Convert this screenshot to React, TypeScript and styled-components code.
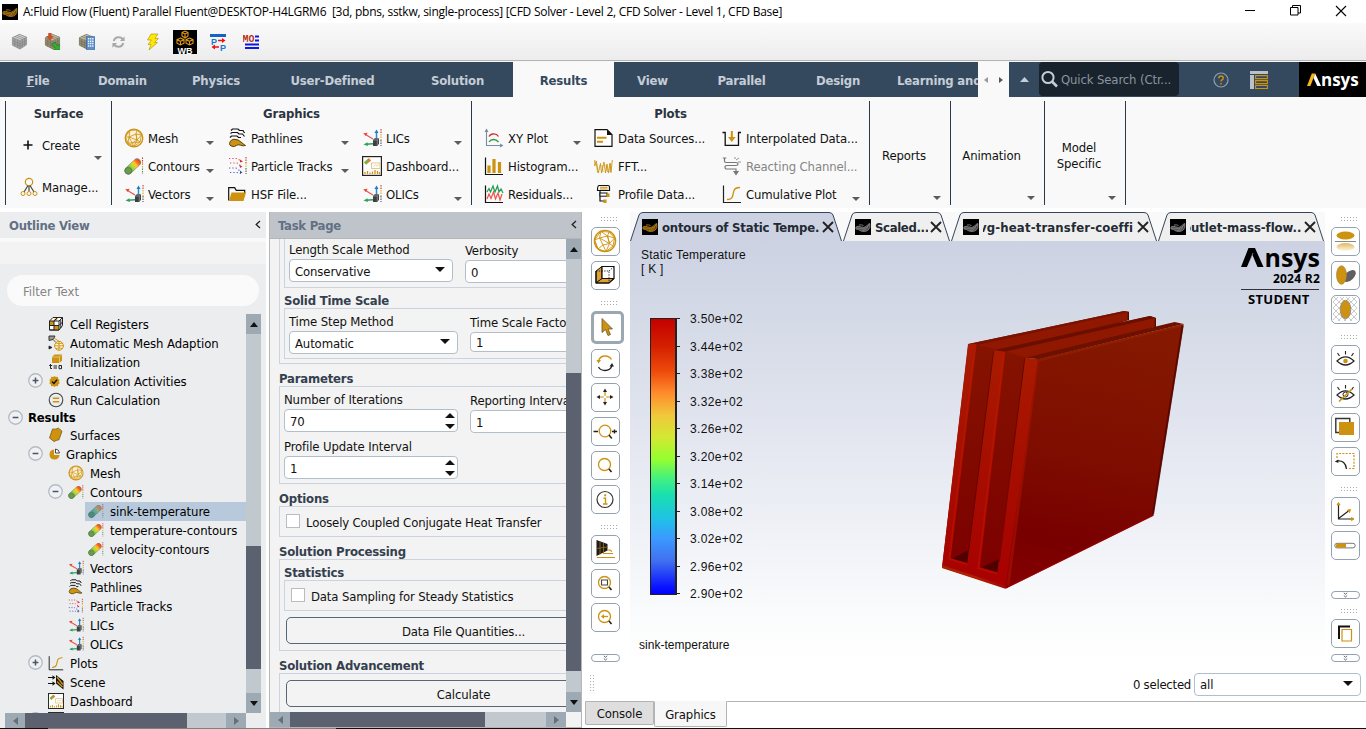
import React from 'react';
import styled, { createGlobalStyle, css } from 'styled-components';

const GOLD = '#cc9210';
const NAVY = '#34495e';
const UI = '"DejaVu Sans Condensed", "DejaVu Sans", sans-serif';
const TIGHT = '-0.13px';

const Global = createGlobalStyle`
  *, *::before, *::after { box-sizing: border-box; }
  html, body { margin: 0; padding: 0; background: #fff; overflow: hidden; }
  body { font-family: ${UI}; font-stretch: condensed; font-size: 12px; color: #111; }
  svg { display: block; flex: none; }
`;

const Window = styled.div`
  width: 1366px;
  height: 729px;
  display: flex;
  flex-direction: column;
  overflow: hidden;
  white-space: nowrap;
`;

/* ---------- title bar ---------- */
const TitleBar = styled.div`
  height: 23px;
  flex: none;
  display: flex;
  align-items: center;
  padding-left: 2px;
  background: #fff;
`;
const TitleText = styled.div`
  flex: 1;
  margin-left: 5px;
  font: 12px/23px "Open Sans", "Noto Sans", sans-serif;
  letter-spacing: -0.26px;
  color: #000;
`;
const WindowButtons = styled.div`
  display: flex;
  align-items: center;
  padding: 0 19px 2px 0;
  gap: 34px;
`;

/* ---------- quick toolbar ---------- */
const QuickBar = styled.div`
  height: 39px;
  flex: none;
  display: flex;
  align-items: center;
  padding: 0 0 1px 11px;
  background: linear-gradient(#fafafa, #ececec);
  border-bottom: 1px solid #f6f6f6;
  box-shadow: inset 0 -1px 0 #b4b4b4;
`;
const QuickSlot = styled.div<{ $w: number }>`
  width: ${(p) => p.$w}px;
  display: flex;
`;

/* ---------- ribbon tabs ---------- */
const TabBar = styled.div`
  height: 35px;
  flex: none;
  display: flex;
  background: ${NAVY};
`;
const RibbonTab = styled.div<{ $w: number; $active?: boolean; $left?: boolean }>`
  width: ${(p) => p.$w}px;
  line-height: 37px;
  font-weight: bold;
  font-size: 13px;
  letter-spacing: -0.2px;
  overflow: hidden;
  text-align: ${(p) => (p.$left ? 'left' : 'center')};
  padding-left: ${(p) => (p.$left ? 13 : 0)}px;
  color: ${(p) => (p.$active ? NAVY : '#c5cdd6')};
  background: ${(p) => (p.$active ? '#f9f9f9' : NAVY)};
`;
const TabScroller = styled.div`
  width: 31px;
  background: #f9f9f9;
  display: flex;
  align-items: center;
  justify-content: center;
  gap: 11px;
`;
const CollapseSlot = styled.div`
  width: 30px;
  display: flex;
  align-items: center;
  justify-content: center;
`;
const SearchBox = styled.div`
  width: 140px;
  height: 34px;
  border-radius: 4px;
  background: #19232d;
  display: flex;
  align-items: center;
  padding-left: 2px;
  gap: 3px;
  font-size: 13px;
  letter-spacing: -0.13px;
  color: #8a949e;
`;
const TabBarIcons = styled.div`
  flex: 1;
  display: flex;
  align-items: center;
  padding-left: 34px;
  gap: 21px;
`;
const BrandBox = styled.div`
  width: 67px;
  background: #000;
  color: #fff;
  display: flex;
  align-items: center;
  padding-left: 8px;
`;
const BrandText = styled.span<{ $size: number; $ls?: number; $up?: number }>`
  font-family: "Open Sans", Inter, sans-serif;
  font-stretch: normal;
  font-weight: 700;
  font-size: ${(p) => p.$size}px;
  line-height: ${(p) => p.$size}px;
  height: ${(p) => p.$size - (p.$up ?? 0)}px;
  margin-top: ${(p) => -(p.$up ?? 0)}px;
  letter-spacing: ${(p) => p.$ls ?? 0}px;
`;

/* ---------- ribbon ---------- */
const Ribbon = styled.div`
  height: 111px;
  flex: none;
  display: flex;
  padding: 4px 0 3px 5px;
  background: #f9f9f9;
`;
const Group = styled.div<{ $w: number }>`
  width: ${(p) => p.$w}px;
  border-left: 1px solid #2c3a48;
  position: relative;
`;
const GroupTitle = styled.div`
  height: 23px;
  line-height: 25px;
  text-align: center;
  font-weight: bold;
  font-size: 13px;
  letter-spacing: -0.12px;
  color: #2c3440;
`;
const ItemGrid = styled.div<{ $cols: string; $pad: number }>`
  display: grid;
  grid-template-columns: ${(p) => p.$cols};
  grid-auto-rows: 28px;
  padding-left: ${(p) => p.$pad}px;
`;
const Item = styled.div<{ $w?: number; $disabled?: boolean }>`
  width: ${(p) => (p.$w ? p.$w + 'px' : 'auto')};
  display: flex;
  align-items: center;
  font-size: 13px;
  letter-spacing: ${TIGHT};
  color: ${(p) => (p.$disabled ? '#858585' : '#111')};
`;
const ItemIcon = styled.span<{ $w: number }>`
  width: ${(p) => p.$w}px;
  flex: none;
  display: flex;
`;
const Caret = styled.span`
  margin: 9px 0 0 auto;
  width: 0;
  height: 0;
  border: 4px solid transparent;
  border-top-color: #5c5c5c;
  border-bottom-width: 0;
`;
const SurfaceStack = styled.div`
  display: flex;
  flex-direction: column;
  padding-left: 14px;
  padding-top: 11px;
  gap: 22px;
`;
const CreateCaret = styled(Caret)`
  margin-top: 21px;
  margin-bottom: -5px;
`;
const CenterGroup = styled.div`
  height: 100%;
  display: flex;
  flex-direction: column;
  font-size: 13px;
  letter-spacing: ${TIGHT};
  line-height: 16px;
  text-align: center;
`;
const CenterLabel = styled.div`
  flex: 1;
  display: flex;
  align-items: center;
  justify-content: center;
  padding-top: 14px;
`;
const CenterCaret = styled.div`
  height: 9px;
  display: flex;
  align-items: flex-start;
  padding-right: 9px;
  & > span { margin-top: 0; }
`;

/* ---------- main split ---------- */
const Main = styled.div`
  flex: 1;
  min-height: 0;
  display: flex;
  padding-top: 4px;
`;
const Footer = styled.div`
  height: 1px;
  flex: none;
  background: linear-gradient(to right, #111 48px, #808080 48px, #808080 336px, #111 336px);
`;

/* ---------- scrollbars ---------- */
const VBar = styled.div`
  width: 15px;
  flex: none;
  display: flex;
  flex-direction: column;
  background: #c1c8ce;
`;
const HBar = styled.div`
  height: 15px;
  flex: none;
  display: flex;
  background: #c1c8ce;
`;
const BarButton = styled.div<{ $h?: boolean }>`
  width: ${(p) => (p.$h ? 20 : 15)}px;
  height: ${(p) => (p.$h ? 15 : 20)}px;
  flex: none;
  background: #9daab3;
  display: flex;
  align-items: center;
  justify-content: center;
`;
const Thumb = styled.div<{ $size: number; $h?: boolean }>`
  flex: none;
  background: #5c6170;
  ${(p) => (p.$h ? css`width: ${p.$size}px;` : css`height: ${p.$size}px;`)}
`;
const Gap = styled.div<{ $grow?: boolean; $size?: number }>`
  flex: ${(p) => (p.$grow ? '1' : `0 0 ${p.$size ?? 0}px`)};
`;
const Corner = styled.div`
  flex: 1;
  background: #f3f3f3;
`;

/* ---------- outline ---------- */
const Outline = styled.div`
  width: 266px;
  flex: none;
  display: flex;
  flex-direction: column;
  background: #ecedef;
`;
const PanelHeader = styled.div<{ $dark?: boolean }>`
  height: 26px;
  flex: none;
  display: flex;
  align-items: center;
  justify-content: space-between;
  padding: 0 ${(p) => (p.$dark ? 4 : 5)}px 0 ${(p) => (p.$dark ? 8 : 9)}px;
  background: ${(p) => (p.$dark ? '#bfc4cb' : '#ecedef')};
  color: #627084;
  font-weight: bold;
  font-size: 13px;
  letter-spacing: -0.27px;
  & > svg { margin-top: -2px; }
`;
const HeaderStrip = styled.div`
  height: 26px;
  flex: none;
  border-top: 4px solid #f9f9f9;
  background: #f3f3f3;
`;
const FilterBox = styled.div`
  height: 31px;
  margin: 11px 7px 8px 7px;
  flex: none;
  border-radius: 16px;
  background: #fafafa;
  padding-left: 16px;
  line-height: 33px;
  font-size: 13px;
  letter-spacing: 0;
  color: #858585;
`;
const TreeArea = styled.div`
  flex: 1;
  min-height: 0;
  display: flex;
  padding-right: 5px;
`;
const Tree = styled.div`
  flex: 1;
  padding-top: 1px;
  overflow: hidden;
`;
const TreeRow = styled.div<{ $indent: number; $short?: boolean }>`
  display: flex;
  height: ${(p) => (p.$short ? 16 : 19)}px;
  margin-left: ${(p) => p.$indent}px;
`;
const ToggleSlot = styled.div`
  width: 17px;
  flex: none;
  display: flex;
  align-items: center;
  padding-bottom: 2px;
  & > svg { margin-left: -0.5px; }
`;
const TreeBody = styled.div<{ $selected?: boolean; $bold?: boolean }>`
  flex: 1;
  display: flex;
  align-items: center;
  padding-left: 3px;
  padding-bottom: ${(p) => (p.$bold ? 2 : 0)}px;
  font-size: 13px;
  letter-spacing: ${(p) => (p.$bold ? '-0.2px' : '-0.08px')};
  color: #000;
  font-weight: ${(p) => (p.$bold ? 'bold' : 'normal')};
  background: ${(p) => (p.$selected ? '#b9c9dc' : 'transparent')};
  & svg { margin-top: -1px; }
`;
const OutlineHScroll = styled.div`
  display: flex;
  padding-left: 5px;
`;

/* ---------- task page ---------- */
const Task = styled.div`
  width: 313px;
  margin-left: 3px;
  flex: none;
  display: flex;
  flex-direction: column;
  background: #f3f3f3;
  border: 1px solid #b4b6b8;
  border-top: 0;
`;
const TaskBody = styled.div`
  flex: 1;
  min-height: 0;
  display: flex;
  border-top: 1px solid #b4b6b8;
`;
const FormView = styled.div`
  width: 296px;
  overflow: hidden;
`;
const Form = styled.div`
  width: 376px;
  padding-left: 9px;
`;
const Box = styled.div<{ $h: number; $open?: boolean }>`
  height: ${(p) => p.$h}px;
  border: 1px solid #ccd3e0;
  ${(p) => p.$open && css`border-top: 0;`}
  padding-left: 4px;
`;
const SectionTitle = styled.div<{ $h?: number }>`
  height: ${(p) => p.$h ?? 22}px;
  display: flex;
  align-items: flex-end;
  line-height: 15px;
  font-weight: bold;
  font-size: 13px;
  letter-spacing: -0.2px;
  color: #34404e;
`;
const Columns = styled.div`
  display: flex;
`;
const Column = styled.div<{ $w: number; $drop?: number }>`
  width: ${(p) => p.$w}px;
  flex: none;
  padding-top: ${(p) => p.$drop ?? 0}px;
`;
const FieldLabel = styled.div<{ $h?: number }>`
  height: ${(p) => p.$h ?? 22}px;
  display: flex;
  align-items: flex-end;
  line-height: 19px;
  font-size: 13px;
  letter-spacing: ${TIGHT};
`;
const Field = styled.div<{ $w: number; $h?: number }>`
  width: ${(p) => p.$w}px;
  height: ${(p) => p.$h ?? 23}px;
  border: 1px solid #b3becb;
  border-radius: 4px;
  background: #fff;
  display: flex;
  align-items: center;
  justify-content: space-between;
  padding: 1px 7px 0 5px;
  font-size: 13px;
  letter-spacing: ${TIGHT};
`;
const DownArrow = styled.span`
  width: 0;
  height: 0;
  margin-top: -3px;
  border: 5px solid transparent;
  border-top-color: #111;
  border-bottom-width: 0;
`;
const Spinner = styled.span`
  display: flex;
  flex-direction: column;
  gap: 6px;
  margin-right: -5px;
  margin-top: -1px;
  &::before, &::after {
    content: '';
    border: 5px solid transparent;
    border-top-width: 0;
    border-bottom-color: #111;
  }
  &::after { transform: rotate(180deg); }
`;
const CheckRow = styled.div`
  height: 29px;
  display: flex;
  align-items: center;
  padding: 1px 0 0 2px;
  gap: 6px;
  font-size: 13px;
  letter-spacing: -0.15px;
`;
const CheckBox = styled.span`
  width: 14px;
  height: 14px;
  border: 1px solid #b9bcc0;
  background: #fff;
  margin-top: -2px;
`;
const WideButton = styled.div`
  width: 355px;
  height: 27px;
  margin: 6px 0 0 2px;
  border: 1px solid #55657a;
  border-radius: 5px;
  line-height: 27px;
  text-align: center;
  font-size: 13px;
  letter-spacing: ${TIGHT};
`;

/* ---------- graphics ---------- */
const Graphics = styled.div`
  flex: 1;
  min-width: 0;
  display: flex;
  flex-direction: column;
  padding-left: 3px;
`;
const Stage = styled.div`
  height: 452px;
  flex: none;
  display: flex;
`;
const ToolColumn = styled.div<{ $w: number; $pad: number }>`
  width: ${(p) => p.$w}px;
  flex: none;
  display: flex;
  flex-direction: column;
  padding: 5px 0 0 ${(p) => p.$pad}px;
`;
const ToolButton = styled.div<{ $active?: boolean }>`
  width: ${(p) => (p.$active ? 33 : 29)}px;
  height: ${(p) => (p.$active ? 33 : 29)}px;
  margin-bottom: 5px;
  padding: 0 ${(p) => (p.$active ? 4 : 2)}px 1px 0;
  border: ${(p) => (p.$active ? '3px solid #9ba7b1' : '1px solid #93a1b0')};
  border-radius: 5px;
  background: #fff;
  display: flex;
  align-items: center;
  justify-content: center;
`;
const Dots = styled.div<{ $before?: number; $after: number }>`
  width: 17px;
  height: 5px;
  margin: ${(p) => p.$before ?? 0}px 0 ${(p) => p.$after}px 10px;
  background-image: radial-gradient(circle at 0.5px 0.5px, #aaa 0.8px, transparent 0.9px);
  background-size: 3px 3px;
`;
const MorePill = styled.div<{ $mt: number; $mb?: number }>`
  width: 29px;
  height: 8px;
  margin: ${(p) => p.$mt}px 0 ${(p) => p.$mb ?? 0}px;
  border: 1px solid #93a1b0;
  border-radius: 4px;
  background: #fff;
  display: flex;
  align-items: center;
  justify-content: center;
`;
const ViewColumn = styled.div`
  width: 695px;
  flex: none;
  display: flex;
  flex-direction: column;
`;
const ViewTabs = styled.div`
  height: 29px;
  display: flex;
  gap: 1px;
  background: #f9f9f9;
`;
const ViewTab = styled.div<{ $w: number }>`
  width: ${(p) => p.$w}px;
  position: relative;
  display: flex;
  align-items: center;
  padding: 0 8px 0 12px;
`;
const TabShape = styled.svg`
  position: absolute;
  left: 0;
  top: 0;
`;
const TabFace = styled.div`
  position: relative;
  display: flex;
  align-items: center;
  width: 100%;
`;
const TabText = styled.div<{ $shift?: number; $ls?: number }>`
  flex: 1;
  min-width: 0;
  overflow: hidden;
  margin: 2px 2px 0 4px;
  text-indent: ${(p) => p.$shift ?? 0}px;
  font-weight: bold;
  font-size: 13px;
  letter-spacing: ${(p) => p.$ls ?? -0.2}px;
  color: #232a33;
`;
const Viewport = styled.div`
  flex: 1;
  position: relative;
  background: linear-gradient(#ccd2e2 0%, #dde1ec 35%, #eceef5 62%, #fafbfc 88%, #fff 100%);
  font-family: "Liberation Sans", Arial, sans-serif;
  font-stretch: normal;
  color: #111;
`;
const Placed = styled.div<{ $x: number; $y: number }>`
  position: absolute;
  left: ${(p) => p.$x}px;
  top: ${(p) => p.$y}px;
`;
const SceneText = styled.div<{ $ls?: number }>`
  font-size: 12px;
  line-height: 14px;
  letter-spacing: ${(p) => p.$ls ?? 0.25}px;
`;
const Legend = styled.div`
  display: flex;
  gap: 10px;
`;
const LegendBar = styled.div`
  width: 27px;
  height: 277px;
  border: 1px solid #222;
  border-right-width: 2px;
  background: linear-gradient(#c40000 0%, #d42000 10%, #ee4a0c 19%, #ff8c2c 27%, #f0c83c 35%,
    #d4e832 43%, #94ff30 51%, #44f080 58%, #18e0b0 64%, #20c0e8 73%, #3c98ff 80%, #4070f0 88%, #0c18ff 97%, #0000ff 100%);
`;
const LegendScale = styled.div`
  display: flex;
  flex-direction: column;
  margin: -6px 0 0 -10px;
`;
const LegendRow = styled.div`
  height: 27.5px;
  display: flex;
  align-items: flex-start;
  font-size: 12px;
  line-height: 14px;
  letter-spacing: 0.33px;
  &::before {
    content: '';
    width: 3px;
    height: 1px;
    margin: 6px 10px 0 0;
    background: #222;
  }
`;
const LogoBlock = styled.div`
  width: 79px;
  display: flex;
  flex-direction: column;
  align-items: flex-end;
  color: #000;
`;
const LogoRow = styled.div`
  height: 26px;
  display: flex;
  align-items: flex-start;
`;
const LogoRule = styled.div`
  width: 78px;
  height: 1px;
  margin: 4px 1px 3px 0;
  background: #333;
`;
const StudentRow = styled.div`
  width: 79px;
  padding-left: 7px;
`;
const SelectRow = styled.div`
  height: 37px;
  flex: none;
  display: flex;
  align-items: center;
  padding: 3px 5px 0 5px;
  font-size: 13px;
  letter-spacing: -0.25px;
`;
const DotsV = styled.div`
  width: 5px;
  height: 18px;
  background-image: radial-gradient(circle at 0.5px 0.5px, #aaa 0.8px, transparent 0.9px);
  background-size: 3px 3px;
`;
const SelectLabel = styled.div`
  margin: 0 3px 0 auto;
`;
const BottomTabs = styled.div`
  flex: 1;
  display: flex;
  align-items: flex-start;
`;
const BottomTab = styled.div<{ $w: number; $active?: boolean }>`
  width: ${(p) => p.$w}px;
  height: ${(p) => (p.$active ? 26 : 24)}px;
  border: 1px solid #b4b4b4;
  border-top-color: ${(p) => (p.$active ? '#f7f7f7' : '#b4b4b4')};
  border-radius: 0 0 2px 2px;
  background: ${(p) => (p.$active ? '#f7f7f7' : '#dedede')};
  text-align: center;
  font-size: 13px;
  letter-spacing: ${TIGHT};
  line-height: ${(p) => (p.$active ? 25 : 23)}px;
`;
const BottomRule = styled.div`
  flex: 1;
  border-top: 1px solid #b4b4b4;
`;

/* ---------- icons ---------- */
type S = { s?: number };

const MeshIcon = ({ s = 20 }: S) => (
  <svg width={s} height={s} viewBox="0 0 20 20" fill="none" stroke={GOLD} strokeWidth=".8">
    <circle cx="10" cy="10" r="8.800" fill="#fbf1da" strokeWidth="1.300" />
    <path d="M6 2.500 13 2l4.500 5L16 14l-6 4.500L4 15 1.500 9zM6 2.500 5 9l7-3 1-4M12 6l5.500 1L13 12zM5 9l3 6 5-3-1-6M8 15l-4 0L5 9H1.500M8 15l2 3.500 3-6.500 3 2M5 9l8 3M8 15l8-1" />
  </svg>
);
const ContoursIcon = ({ s = 20, cool }: S & { cool?: boolean }) => {
  const id = cool ? 'tubeCool' : 'tubeHot';
  return (
    <svg width={s} height={s} viewBox="0 0 20 20" fill="none">
      <defs>
        <linearGradient id={id} gradientUnits="userSpaceOnUse" x1="2" y1="17" x2="17" y2="3">
          <stop offset="0.2" stopColor={cool ? '#3c9a8c' : '#5ea83c'} />
          <stop offset=".45" stopColor={cool ? '#58a8a0' : '#b4dc3c'} />
          <stop offset=".62" stopColor={cool ? '#98a878' : '#ffc828'} />
          <stop offset=".78" stopColor={cool ? '#b88468' : '#f8641c'} />
          <stop offset="1" stopColor={cool ? '#7a88a4' : '#d83c10'} />
        </linearGradient>
      </defs>
      <path d="M4.500 14.500 13 6.500" stroke="#7c8078" strokeWidth="7.800" strokeLinecap="round" />
      <path d="M4.500 14.500 13 6.500" stroke={`url(#${id})`} strokeWidth="6.800" strokeLinecap="round" />
      <ellipse cx="4.300" cy="14.800" rx="3.500" ry="3.300" fill={cool ? '#4a8c8c' : '#6a9c50'} stroke="#4c7a40" strokeWidth=".7" />
      <path d="M18.500 1.500v6" stroke="#c84030" strokeWidth="1.100" strokeDasharray="1.500 1" />
      <path d="M18.500 7.500v5" stroke="#d8a820" strokeWidth="1.100" strokeDasharray="1.500 1" />
      <path d="M18.500 12.500v5.500" stroke="#4c8c5c" strokeWidth="1.100" strokeDasharray="1.500 1" />
    </svg>
  );
};
const VectorsIcon = ({ s = 20 }: S) => (
  <svg width={s} height={s} viewBox="0 0 20 20" fill="none">
    <path d="M11 11 3.500 6.500" stroke="#e8584c" strokeWidth="1.300" />
    <path d="M1.200 5.200l4.500-.4-1.900 3.300z" fill="#e8483c" />
    <path d="M14.500 10V4.500" stroke="#2c88cc" strokeWidth="1.500" />
    <path d="M14.500 1.500l2 3.500h-4z" fill="#1c7cc8" />
    <path d="M11 15.800 4 16.300" stroke="#2ca058" strokeWidth="1.500" />
    <path d="M1.500 16.500l4-2.200.4 3.700z" fill="#2ca058" />
    <path d="M11 12l1.700-1.800H17v5.500L15.300 18H11z" fill="#3c4044" />
    <path d="M11 12h4.300l1.700-1.800M15.300 12v6" stroke="#9a9ea2" strokeWidth=".7" />
    <path d="M19 1v5" stroke="#c84030" strokeWidth="1.100" strokeDasharray="1.500 1" />
    <path d="M19 6v6" stroke="#d8a820" strokeWidth="1.100" strokeDasharray="1.500 1" />
    <path d="M19 12v6" stroke="#555" strokeWidth="1.100" strokeDasharray="1.500 1" />
  </svg>
);
const PathlinesIcon = ({ s = 20 }: S) => (
  <svg width={s} height={s} viewBox="0 0 20 20" fill="none" stroke="#111" strokeWidth="1.200">
    <path d="M3 2.500 4.500 1H10l1.500 1.500H15L16.500 5M2.500 5.500 4 4.500h5.500L11 6h3.500L16.500 8.500M2 9.500 3.500 8H9l1.500 1.500H13" />
    <path d="M1.500 15.500q1-4.500 5.500-4.200 3.500.2 6 2.700 2 1.800 4.500 3.500-2 .8-5-.3-2.500-1-4 .3-2 1.500-4.500.8-2.700-.7-2.500-2.800z" fill={GOLD} stroke="#4a3608" strokeWidth=".9" />
  </svg>
);
const ParticleIcon = ({ s = 20 }: S) => (
  <svg width={s} height={s} viewBox="0 0 20 20" fill="none" strokeWidth="1.200">
    <path d="M1 2.500h8l4 2.500" stroke="#e05048" strokeDasharray="1.300 2" />
    <path d="M2 7h7l4 3" stroke="#e05048" strokeDasharray="1.300 2" />
    <path d="M12 3.500l3 2-3 1zM11.500 9l3 1.500-2.500 1.500z" fill="#c83048" />
    <path d="M1 12h7l5 3.500" stroke="#5060d0" strokeDasharray="1.300 2" />
    <path d="M2 16.500h7l4 1" stroke="#5060d0" strokeDasharray="1.300 2" />
    <path d="M12 14.500l2.500 2-2.500 1z" fill="#404890" />
    <path d="M18 1v6" stroke="#c84030" strokeWidth="1.100" strokeDasharray="1.500 1" />
    <path d="M18 7v5" stroke="#d8c020" strokeWidth="1.100" strokeDasharray="1.500 1" />
    <path d="M18 12v6" stroke="#556" strokeWidth="1.100" strokeDasharray="1.500 1" />
  </svg>
);
const FolderIcon = () => (
  <svg width="20" height="20" viewBox="0 0 20 20">
    <path d="M.7 16.500V3.700h6l1.500 2.600h8.500v3" fill="none" stroke="#111" strokeWidth="1.200" />
    <path d="M3.500 8.500H18L15.500 17H1z" fill={GOLD} />
  </svg>
);
const DashIcon = ({ s = 20 }: S) => (
  <svg width={s} height={s} viewBox="0 0 20 20" fill="none">
    <rect x=".6" y=".6" width="18.800" height="18.800" fill="#fff" stroke="#222" strokeWidth="1.200" />
    <path d="M3 7.500 6.500 4.500" stroke="#7fb03c" strokeWidth="3.300" />
    <path d="M6 5 8 3.200" stroke="#e08030" strokeWidth="3.300" />
    <rect x="9.500" y="7" width="8.500" height="5.500" stroke="#e4c888" />
    <path d="M11.500 10.500l2-1.500 1.500 1 2-1.500" stroke="#e4c888" strokeWidth=".8" />
    <path d="M3 18v-2M5.500 18v-3M8 18v-1.500M10.500 18v-2.500M13 18v-4M15.500 18v-3M17.500 18v-2" stroke={GOLD} strokeWidth="1.300" />
  </svg>
);
const XYIcon = () => (
  <svg width="20" height="20" viewBox="0 0 20 20" fill="none">
    <path d="M2.500 1.500v16H18" stroke="#7a8ca0" strokeWidth="1.100" />
    <path d="M.5 4l2-3.500 2 3.500zM16 15.500l3.500 2-3.500 2z" fill="#7a8ca0" />
    <path d="M5 8.500q1-2 3.500-2.500 4-.7 6 2.500" stroke="#d02828" strokeWidth="1.300" />
    <path d="M5 14q1.500-2.500 4.500-2.500 3 0 5 2.500" stroke="#2c9c3c" strokeWidth="1.300" />
  </svg>
);
const HistIcon = () => (
  <svg width="20" height="20" viewBox="0 0 20 20" fill="none">
    <path d="M1.500 1.500v17H19" stroke="#111" strokeWidth="1.200" />
    <path d="M5 17V9.500M10 17V3M15.500 17V6" stroke={GOLD} strokeWidth="3.200" />
  </svg>
);
const ResidIcon = () => (
  <svg width="20" height="20" viewBox="0 0 20 20" fill="none">
    <path d="M1.500 1.500v17H19" stroke="#111" strokeWidth="1.200" />
    <path d="M3 8l2-3.500L6.500 8 9 2l2 6 2.500-6L15 8l2-3 2 4" stroke="#1c9c54" strokeWidth="1.200" />
    <path d="M3 15l2-5 2 4.500L9.500 8l2 7L14 9l2 7 2-6" stroke="#f05048" strokeWidth="1.200" />
  </svg>
);
const SourcesIcon = () => (
  <svg width="20" height="20" viewBox="0 0 20 20" fill="none">
    <path d="M1 1.700h12l5 5v11.600H1z" fill="#fff" stroke="#111" strokeWidth="1.200" />
    <path d="M13 1.500v5.500h5.500z" fill="#111" />
    <path d="M3 9.800h9.500M3 13.800h6" stroke={GOLD} strokeWidth="2" />
  </svg>
);
const FftIcon = () => (
  <svg width="20" height="20" viewBox="0 0 20 20" fill="none" stroke={GOLD} strokeWidth=".9">
    <path d="M.8 4v6l1.500-5 2 12L6.500 7.500l1 9.500L10 6l1.500 11L13 8l1.500 9L16 7l1 9.500L18.300 4" />
    <path d="M2.500 8l1 8.500M8 9l1 7M12 9l1.500 7M16.500 8l-.5 8" strokeWidth=".7" />
  </svg>
);
const ProfileIcon = () => (
  <svg width="20" height="20" viewBox="0 0 20 20" fill="none">
    <path d="M3.500 6.500q0-5 1.500-5h9q1.500 0 1.500 1.500v3.500zM6 6.500V10h7M6 10v7h4" stroke="#111" strokeWidth="1.200" />
    <path d="M6 3.300h7.500M6 5h7.500" stroke={GOLD} />
    <rect x="6" y="9" width="7" height="3.200" stroke="#111" fill="#fff" />
    <path d="M12.500 9.500h3v3.500h-3zM9.500 15.500h3v3.500h-3z" fill={GOLD} />
  </svg>
);
const InterpIcon = () => (
  <svg width="20" height="20" viewBox="0 0 20 20" fill="none">
    <path d="M.5 4.500h3.200M3.200 4v13.300h13.300V4M16 4.500h3" stroke="#111" strokeWidth="1.300" />
    <path d="M9.800 3v8" stroke={GOLD} strokeWidth="2" />
    <path d="M6 9h7.600l-3.800 5z" fill={GOLD} />
  </svg>
);
const ReactIcon = () => (
  <svg width="20" height="20" viewBox="0 0 20 20" fill="none" stroke="#777" strokeWidth="1.200">
    <path d="M2.500 2v3q0 1.500 1.500 1.500h10q2 0 2 1.500t-2 1.500H5q-2 0-2 1.800t2 1.700h9v4" />
    <path d="M.8 2h3.500M12 15.500l2 3 2-3z" fill="#777" />
    <path d="M14 4l3-2M16 6h3M13 3V1" strokeWidth=".8" />
  </svg>
);
const CumIcon = ({ s = 20 }: S) => (
  <svg width={s} height={s} viewBox="0 0 20 20" fill="none">
    <path d="M1.500 1.500v17H19" stroke="#222" strokeWidth="1.200" />
    <path d="M5 15.500q4.500 0 5.500-3l1.500-6q1-3 6-3" stroke={GOLD} strokeWidth="1.300" />
  </svg>
);
const ManageIcon = () => (
  <svg width="18" height="20" viewBox="0 0 18 20" fill="none">
    <circle cx="9" cy="5" r="3.700" stroke={GOLD} strokeWidth="1.200" />
    <path d="M8 8.500 4 15M9 9V14M10 8.500l4 6.500" stroke="#444" strokeWidth="1.200" />
    <circle cx="3" cy="16.500" r="2" stroke={GOLD} />
    <circle cx="9" cy="16.500" r="2" stroke={GOLD} />
    <circle cx="15" cy="16.500" r="2" stroke={GOLD} />
  </svg>
);
const PlusIcon = () => (
  <svg width="10" height="10" viewBox="0 0 10 10" stroke="#111" strokeWidth="1.600">
    <path d="M5 .5v9M.5 5h9" />
  </svg>
);
const FluentIcon = ({ gray }: { gray?: boolean }) => (
  <svg width="16" height="16" viewBox="0 0 16 16" fill="none" strokeWidth=".9">
    <path d="M0 0h16v16H0z" fill="#000" />
    <g stroke={gray ? '#848484' : '#b07c18'}>
      <path d="M1 8Q3 6.500 6 8q3 1.200 5-.5 2-2.500 3.800-3v4q-1 3-3.800 3.700-4 .8-6-.7Q3.500 10 1 10z" fill={gray ? '#444' : '#644408'} />
      <path d="M2 9q2 0 4 .8 3 1 6-1.800l2.800-2.500M4 6q3-.5 4.500.5M7 11.500q4 0 6-3" />
    </g>
  </svg>
);
const CubeIcon = ({ gray, extra }: { gray?: boolean; extra?: React.ReactNode }) => (
  <svg width="17" height="17" viewBox="0 0 18 18" strokeWidth=".6">
    <path d="M1.500 5 9 1.500 16.500 4.500v8L9.500 17l-8-4z" fill={gray ? '#a4a4a4' : '#989274'} stroke={gray ? '#808080' : '#5c5844'} />
    <path d="M1.500 5 9 1.500l7.500 3L9.500 8z" fill={gray ? '#d0d0d0' : '#c8c2a0'} stroke="#888" />
    <path d="M9.500 8v9M4 6.200v8M7 7v9M12 7v8.500M14.500 5.500v8M1.500 8l8 3.500 7-4M1.500 10.500l8 3.500 7-4M4 3.800l8 3M6.500 2.700l8 3" stroke={gray ? '#7c7c7c' : '#6c6852'} fill="none" />
    {extra}
  </svg>
);
const ToggleIcon = ({ open }: { open?: boolean }) => (
  <svg width="15" height="15" viewBox="0 0 14 14" fill="none">
    <circle cx="7" cy="7" r="6.300" stroke="#b4bac4" strokeWidth="1.200" fill="#f0f1f3" />
    <path d={open ? 'M4.300 7h5.400' : 'M4.300 7h5.400M7 4.300v5.400'} stroke="#4a5568" strokeWidth="1.400" />
  </svg>
);
const RegistersIcon = () => (
  <svg width="16" height="16" viewBox="0 0 16 16" fill="none" stroke="#222">
    <path d="M1.500 5 5 1.500h9.500v8L11 14H1.500z" fill="#fff" />
    <path d="M1.500 5H6v4.500H1.500zM6 9.500h5V14H6z" fill={GOLD} stroke="none" />
    <path d="M7 2.500h3L8.500 4.500h-3z" fill={GOLD} stroke="none" />
    <path d="M1.500 5H11v9H1.500zM11 5l3.500-3.500M6 5v9M1.500 9.500H11l3.500-3.500M6 5l3.500-3.500M12.800 3.500v8.500" />
  </svg>
);
const AdaptionIcon = () => (
  <svg width="16" height="16" viewBox="0 0 16 16" fill="none">
    <path d="M1 5.500V1h6L5 4.500z" fill="#999" stroke="#222" strokeWidth=".9" />
    <path d="M1 11l3 1.500L1 14zM5 4.500l3 3" fill="#222" stroke="#222" strokeWidth=".8" />
    <path d="M5 2.500 14 8" stroke={GOLD} strokeWidth=".9" />
    <circle cx="11" cy="10.800" r="4.400" stroke={GOLD} fill="#fff4d8" />
    <path d="M11 6.500v9M6.500 10.800h9M8 8q3 1.500 6.500 0M8 13.500q3-1.500 6.500 0" stroke={GOLD} strokeWidth=".9" />
  </svg>
);
const InitIcon = () => (
  <svg width="16" height="16" viewBox="0 0 16 16">
    <path d="M4 3 6.500.5H14v6L11.500 9H4z" fill={GOLD} />
    <path d="M4 3h7.500v6M11.500 3 14 .5" stroke="#f0d090" strokeWidth=".8" fill="none" />
    <path d="M2.500 10v4.500h1.500M1.200 11.500h3M5.500 12h3.500M5.500 14h3.500M11 11.500h2.500v3.200H11z" stroke="#222" strokeWidth="1" fill="none" />
  </svg>
);
const ActivitiesIcon = () => (
  <svg width="13" height="13" viewBox="0 0 13 13">
    <path d="M6.500 1 7.800 2l2-.2.400 1.900 1.500 1.200-.8 1.600.8 1.700-1.500 1.200-.4 1.900-2-.2L6.500 12 5.200 11.100l-2 .2-.4-1.900L1.300 8.200l.8-1.700-.8-1.600L2.800 3.700l.4-1.900 2 .2z" fill={GOLD} />
    <path d="M4 6.500l1.900 1.900L9 4.700" fill="none" stroke="#111" strokeWidth="1.400" />
  </svg>
);
const RunIcon = () => (
  <svg width="16" height="16" viewBox="0 0 16 16" fill="none">
    <circle cx="8" cy="8" r="6.800" stroke="#444" strokeWidth="1.100" />
    <path d="M4.800 6.300h6.400M4.800 9.700h6.400" stroke={GOLD} strokeWidth="1.600" />
  </svg>
);
const SurfacesIcon = () => (
  <svg width="16" height="16" viewBox="0 0 16 16">
    <path d="M4.500 2q3 .5 6-.8l3.500 3-3 8.500q-2.500.5-5 1.800L1.500 11z" fill={GOLD} stroke="#7a5a10" strokeWidth=".8" />
  </svg>
);
const PieIcon = () => (
  <svg width="13" height="13" viewBox="0 0 13 13">
    <path d="M6 1.500A5 5 0 1 0 11.500 7H6z" fill={GOLD} />
    <path d="M7.500 1A4.500 4.500 0 0 1 11.500 5H7.500z" fill="#fff" stroke="#333" strokeWidth=".9" />
  </svg>
);
const SceneIcon = () => (
  <svg width="16" height="16" viewBox="0 0 16 16">
    <path d="M0 3.500h5M0 9.500h5" stroke="#111" strokeWidth="1.200" />
    <path d="M4.500 1.200 7.500 3.500l-3 2.300zM4.500 7.200l3 2.300-3 2.300z" fill="#111" />
    <path d="M8 1 15.500 7v8.500L8 9.500z" fill="#111" />
    <path d="M9 3l5.800 7.500M9 7.500l5.500 5.500" stroke={GOLD} strokeWidth="1.500" />
  </svg>
);
const Tri = ({ d, c = '#111', w = 10, h = 6 }: { d: 'up' | 'down' | 'left' | 'right'; c?: string; w?: number; h?: number }) => {
  const pts = {
    up: `0,${h} ${w / 2},0 ${w},${h}`,
    down: `0,0 ${w},0 ${w / 2},${h}`,
    left: `${w},0 0,${h / 2} ${w},${h}`,
    right: `0,0 ${w},${h / 2} 0,${h}`,
  }[d];
  return (
    <svg width={w} height={h}>
      <polygon points={pts} fill={c} />
    </svg>
  );
};
const Chevron = () => (
  <svg width="6" height="9" viewBox="0 0 6 9" fill="none" stroke="#222" strokeWidth="1.300">
    <path d="M5 1 1.200 4.500 5 8" />
  </svg>
);
const CloseIcon = () => (
  <svg width="12" height="12" viewBox="0 0 12 12" stroke="#222" strokeWidth="1.900">
    <path d="M1 1l10 10M11 1 1 11" />
  </svg>
);
const Svg = ({ children, s = 22 }: { children: React.ReactNode; s?: number }) => (
  <svg width={s} height={s} viewBox="0 0 22 22" fill="none">
    {children}
  </svg>
);
const PillMark = () => (
  <svg width="5" height="6" viewBox="0 0 5 6" fill="none" stroke="#444" strokeWidth=".8">
    <path d="M.8.8l1.700 1.500L4.200.8M.8 3.500 2.500 5l1.700-1.500" />
  </svg>
);

/* lens body shared by the zoom tools */
const Lens = ({ children }: { children?: React.ReactNode }) => (
  <Svg>
    <circle cx="10.500" cy="10.500" r="6" stroke={GOLD} strokeWidth="1.300" />
    <path d="M15 15l2.500 3" stroke="#222" strokeWidth="1.600" />
    {children}
  </Svg>
);
const Eye = ({ off }: { off?: boolean }) => (
  <Svg>
    <path d="M3 13q8.500-8.500 17 0-8.500 8-17 0z" stroke="#222" strokeWidth="1.200" />
    <path d="M11.500 3v3.500M3.500 5l2 3M19.500 5l-2 3" stroke="#222" strokeWidth="1.100" />
    {off ? (
      <>
        <circle cx="11.500" cy="12.500" r="2.500" stroke="#222" />
        <path d="M5 19.500 18 7" stroke={GOLD} strokeWidth="1.700" />
      </>
    ) : (
      <circle cx="11.500" cy="13" r="2.300" fill={GOLD} />
    )}
  </Svg>
);
const Sphere = () => (
  <svg width="24" height="24" viewBox="0 0 24 24" fill="none" stroke={GOLD} strokeWidth=".9">
    <circle cx="12" cy="12" r="10.600" strokeWidth="1.400" />
    <path d="M8 2.500 16 3l5.500 6L20 17l-7 5.500L5 20 1.500 11zM8 2.500 6.500 9l8-2L16 3M14.500 7l7 2-5 5.500zM6.500 9l3.500 7 6.500-1.500-2-7.500M10 16l-5 4L1.500 11l5-2M10 16l3 6.500 3.500-8L20 17M6.500 9l10 5.500M8 2.500l6.500 4.500" />
  </svg>
);

/* ---------- heat sink model ---------- */
const HeatSink = () => (
  <svg width="290" height="310" viewBox="0 0 870 930">
    <defs>
      <linearGradient id="face" x1="0.300" y1="0" x2="0.150" y2="1">
        <stop offset="0" stopColor="#841800" />
        <stop offset=".5" stopColor="#7e0c00" />
        <stop offset=".8" stopColor="#780000" />
        <stop offset="1" stopColor="#840000" />
      </linearGradient>
      <linearGradient id="front" gradientUnits="userSpaceOnUse" x1="0" y1="150" x2="0" y2="880">
        <stop offset="0" stopColor="#a81c00" />
        <stop offset=".5" stopColor="#a60e00" />
        <stop offset="1" stopColor="#a80000" />
      </linearGradient>
      <linearGradient id="inner" gradientUnits="userSpaceOnUse" x1="0" y1="60" x2="0" y2="820">
        <stop offset="0" stopColor="#861600" />
        <stop offset="1" stopColor="#7c0000" />
      </linearGradient>
      <linearGradient id="base" x1="0" y1="0" x2="1" y2="0">
        <stop offset="0" stopColor="#a02800" />
        <stop offset=".5" stopColor="#b42000" />
        <stop offset="1" stopColor="#a00c00" />
      </linearGradient>
    </defs>
    {/* rear fin */}
    <path d="M145 147 612 48 627 50 625 76 500 115 300 190 260 840 66 818z" fill="url(#inner)" />
    <path d="M145 147 612 48 627 51 170 151z" fill="#7a1200" />
    <path d="M170 151 627 51 625 74 240 164z" fill="#901800" />
    <path d="M625 52V76" stroke="#4c0c00" strokeWidth="4" />
    {/* middle fin */}
    <path d="M222 166 690 63 708 69 705 95 530 148 318 188 250 800 160 815z" fill="url(#inner)" />
    <path d="M222 166 690 63 708 69 256 170z" fill="#6a0e00" />
    <path d="M256 170 706 69 704 96 320 188z" fill="#901800" />
    <path d="M706 69V96" stroke="#501000" strokeWidth="4" />
    {/* channel floors */}
    <path d="M92 793 146 766 144 806zM180 820 238 792 234 834z" fill="#500000" />
    {/* fin end faces and the base plate */}
    <path d="M144 147h26L92 790 142 804 222 166 256 170 180 817 232 832 316 188 358 192 262 880 66 818z" fill="url(#front)" />
    <path d="M165 151 88 792 142 808M251 172 175 820 232 836" stroke="#c41400" strokeWidth="6" fill="none" opacity=".5" />
    <path d="M221 168 146 768M314 190 238 800" stroke="#400000" strokeWidth="2" fill="none" opacity=".7" />
    {/* near fin */}
    <path d="M316 188 764 81 791 87 358 193z" fill="#6c1000" />
    <path d="M352 193 791 87 700 662 256 881z" fill="url(#face)" />
    <path d="M355 196 785 92" stroke="#9c2400" strokeWidth="7" opacity=".5" />
    <path d="M352 195 264 872" stroke="#b81400" strokeWidth="9" opacity=".5" />
    <path d="M788 92 699 658" stroke="#500400" strokeWidth="6" opacity=".8" />
    <path d="M66 811 256 872V881L66 819z" fill="url(#base)" />
    <path d="M256 879 700 660" stroke="#980000" strokeWidth="5" opacity=".7" />
  </svg>
);

/* ---------- data ---------- */
const ribbonTabs = [
  { t: 'Domain', w: 93 },
  { t: 'Physics', w: 94 },
  { t: 'User-Defined', w: 139 },
  { t: 'Solution', w: 111 },
  { t: 'Results', w: 101, active: true },
  { t: 'View', w: 77 },
  { t: 'Parallel', w: 101 },
  { t: 'Design', w: 92 },
  { t: 'Learning and', w: 94, left: true },
];

type RItem = { icon: React.ReactNode; t: string; w?: number; caret?: boolean; off?: boolean };
const graphicsItems: RItem[] = [
  { icon: <MeshIcon />, t: 'Mesh', w: 90, caret: true },
  { icon: <PathlinesIcon />, t: 'Pathlines', w: 121, caret: true },
  { icon: <VectorsIcon />, t: 'LICs', w: 100, caret: true },
  { icon: <ContoursIcon />, t: 'Contours', w: 90, caret: true },
  { icon: <ParticleIcon />, t: 'Particle Tracks', w: 121, caret: true },
  { icon: <DashIcon />, t: 'Dashboard...' },
  { icon: <VectorsIcon />, t: 'Vectors', w: 90, caret: true },
  { icon: <FolderIcon />, t: 'HSF File...' },
  { icon: <VectorsIcon />, t: 'OLICs', w: 100, caret: true },
];
const plotItems: RItem[] = [
  { icon: <XYIcon />, t: 'XY Plot', w: 97, caret: true },
  { icon: <SourcesIcon />, t: 'Data Sources...' },
  { icon: <InterpIcon />, t: 'Interpolated Data...' },
  { icon: <HistIcon />, t: 'Histogram...' },
  { icon: <FftIcon />, t: 'FFT...' },
  { icon: <ReactIcon />, t: 'Reacting Channel...', off: true },
  { icon: <ResidIcon />, t: 'Residuals...' },
  { icon: <ProfileIcon />, t: 'Profile Data...' },
  { icon: <CumIcon />, t: 'Cumulative Plot', w: 138, caret: true },
];

type TNode = { t: string; d: number; icon?: React.ReactNode; toggle?: 'open' | 'closed'; iw?: number; sel?: boolean; bold?: boolean };
const tree: TNode[] = [
  { t: 'Cell Registers', d: 28, icon: <RegistersIcon /> },
  { t: 'Automatic Mesh Adaption', d: 28, icon: <AdaptionIcon /> },
  { t: 'Initialization', d: 28, icon: <InitIcon /> },
  { t: 'Calculation Activities', d: 28, icon: <ActivitiesIcon />, toggle: 'closed', iw: 18 },
  { t: 'Run Calculation', d: 28, icon: <RunIcon /> },
  { t: 'Results', d: 8, toggle: 'open', bold: true },
  { t: 'Surfaces', d: 28, icon: <SurfacesIcon /> },
  { t: 'Graphics', d: 28, icon: <PieIcon />, toggle: 'open', iw: 18 },
  { t: 'Mesh', d: 48, icon: <MeshIcon s={16} /> },
  { t: 'Contours', d: 48, icon: <ContoursIcon s={16} />, toggle: 'open' },
  { t: 'sink-temperature', d: 68, icon: <ContoursIcon s={16} cool />, sel: true },
  { t: 'temperature-contours', d: 68, icon: <ContoursIcon s={16} /> },
  { t: 'velocity-contours', d: 68, icon: <ContoursIcon s={16} /> },
  { t: 'Vectors', d: 48, icon: <VectorsIcon s={16} /> },
  { t: 'Pathlines', d: 48, icon: <PathlinesIcon s={16} /> },
  { t: 'Particle Tracks', d: 48, icon: <ParticleIcon s={16} /> },
  { t: 'LICs', d: 48, icon: <VectorsIcon s={16} /> },
  { t: 'OLICs', d: 48, icon: <VectorsIcon s={16} /> },
  { t: 'Plots', d: 28, icon: <CumIcon s={16} />, toggle: 'closed' },
  { t: 'Scene', d: 28, icon: <SceneIcon /> },
  { t: 'Dashboard', d: 28, icon: <DashIcon s={16} /> },
];

const legend = ['3.50e+02', '3.44e+02', '3.38e+02', '3.32e+02', '3.26e+02', '3.20e+02', '3.14e+02', '3.08e+02', '3.02e+02', '2.96e+02', '2.90e+02'];

const viewTabs = [
  { t: 'ontours of Static Tempe.', w: 212, active: true, shift: 0, ls: -0.2 },
  { t: 'Scaled...', w: 107, shift: 0, ls: -0.35 },
  { t: 'vg-heat-transfer-coeffi', w: 206, shift: -4, ls: 0.15 },
  { t: 'outlet-mass-flow..', w: 166, shift: -7, ls: -0.05 },
];

const RibbonItem = ({ it, slot = 24 }: { it: RItem; slot?: number }) => (
  <Item $w={it.w} $disabled={it.off}>
    <ItemIcon $w={slot}>{it.icon}</ItemIcon>
    {it.t}
    {it.caret && <Caret />}
  </Item>
);

export default function App() {
  return (
    <Window>
      <Global />
      <TitleBar>
        <FluentIcon />
        <TitleText>
          A:Fluid Flow (Fluent) Parallel Fluent@DESKTOP-H4LGRM6 &nbsp;[3d, pbns, sstkw, single-process] [CFD Solver - Level 2, CFD Solver - Level 1, CFD Base]
        </TitleText>
        <WindowButtons>
          <svg width="11" height="11"><path d="M0 5.500h10" stroke="#000" /></svg>
          <svg width="11" height="11" fill="none" stroke="#000"><path d="M.5 2.500h7.500v7.500H.5zM2.500 2.500V.5h8v7.500H8" /></svg>
          <svg width="12" height="12" stroke="#000" strokeWidth="1.100"><path d="M1 1l10 10M11 1 1 11" /></svg>
        </WindowButtons>
      </TitleBar>

      <QuickBar>
        <QuickSlot $w={33}><CubeIcon gray /></QuickSlot>
        <QuickSlot $w={34}>
          <CubeIcon extra={<><path d="M4.500 0H8v3.500h2.500L6.300 8 2 3.500h2.500z" fill="#c8502c" /><path d="M11 9.500l3.500 4 2-1.500v6h-6.500l2-2-3.500-4z" fill="#2cb42c" stroke="#186018" /></>} />
        </QuickSlot>
        <QuickSlot $w={33}>
          <CubeIcon extra={<><rect x="9" y="4" width="9" height="13.500" fill="#5c90cc" stroke="#2c5c9c" /><path d="M10.500 6h6M10.500 8.700h6M10.500 11.200h6M10.500 13.700h6" stroke="#e8f0fc" strokeWidth="1.500" strokeDasharray="1.500 .7" /></>} />
        </QuickSlot>
        <QuickSlot $w={35}>
          <svg width="15" height="18" viewBox="0 0 16 18" fill="none" stroke="#a8a8a8" strokeWidth="2.200"><path d="M3 8q1-4 5-4 3 0 4.500 2M13 10q-1 4-5 4-3 0-4.500-2" /><path d="M14.500 3v5h-5zM1.500 15v-5h5z" fill="#a8a8a8" stroke="none" /></svg>
        </QuickSlot>
        <QuickSlot $w={27}>
          <svg width="14" height="18" viewBox="0 0 14 18"><path d="M5 1h7L9 5.500h3.500L8.500 9.500h3L3 17l2-5.500H2L5.500 7H1.500z" fill="#ffe800" stroke="#b89c20" strokeWidth=".7" /></svg>
        </QuickSlot>
        <QuickSlot $w={37}>
          <svg width="24" height="24" viewBox="0 0 24 24" fill="none">
            <path d="M0 0h24v24H0z" fill="#000" />
            <path d="M12 1l3 1.500v3.500L12 8 9 6V2.500zM9 2.500l3 1.500 3-1.500M12 4v4M7.500 8l3.500 1.700v3.500L7.500 15 4 13.200V9.700zM4 9.700l3.500 1.600L11 9.700M7.500 11.300V15M16.500 8l3.500 1.700v3.500L16.500 15 13 13.200V9.700zM13 9.700l3.500 1.600L20 9.700M16.500 11.300V15" stroke="#e09a18" strokeWidth="1.100" />
            <text x="12" y="24" fontSize="9" fontWeight="bold" fontFamily="Liberation Sans, sans-serif" fill="#fff" textAnchor="middle">WB</text>
          </svg>
        </QuickSlot>
        <QuickSlot $w={33}>
          <svg width="16" height="18" viewBox="0 0 16 18">
            <path d="M0 1h16v3H0z" fill="#1464c8" />
            <text x="1" y="12" fontSize="9" fontWeight="bold" fontFamily="Liberation Sans, sans-serif" fill="#1878d0">P</text>
            <text x="10" y="18" fontSize="9" fontWeight="bold" fontFamily="Liberation Sans, sans-serif" fill="#1878d0">P</text>
            <path d="M8 7.500h5M4 14h5" stroke="#f01010" strokeWidth="1.400" />
            <path d="M12 5l3.500 2.500-3.500 2.500zM5 11.500 1.500 14 5 16.500z" fill="#f01010" />
          </svg>
        </QuickSlot>
        <QuickSlot $w={20}>
          <svg width="17" height="18" viewBox="0 0 17 18">
            <text x="-.5" y="9" fontSize="10" fontWeight="bold" fontFamily="Liberation Mono, monospace" fill="#b83418">MO</text>
            <path d="M12 3.500h4M12 7.500h4M2 11.500h14M2 15h14" stroke="#0c18e0" strokeWidth="2" />
          </svg>
        </QuickSlot>
      </QuickBar>

      <TabBar>
        <RibbonTab $w={76}><u>F</u>ile</RibbonTab>
        {ribbonTabs.map((r) => (
          <RibbonTab key={r.t} $w={r.w} $active={r.active} $left={r.left}>{r.t}</RibbonTab>
        ))}
        <TabScroller>
          <Tri d="left" w={4} h={6} c="#999" />
          <Tri d="right" w={4} h={6} c="#555" />
        </TabScroller>
        <CollapseSlot><Tri d="up" w={9} h={5} c="#c5cdd6" /></CollapseSlot>
        <SearchBox>
          <svg width="17" height="18" viewBox="0 0 17 18" fill="none" stroke="#c5cdd6"><circle cx="7" cy="7.500" r="5.600" strokeWidth="2" /><path d="M11 11.500l5 5" strokeWidth="2.600" /></svg>
          Quick Search (Ctr...
        </SearchBox>
        <TabBarIcons>
          <svg width="16" height="16" viewBox="0 0 16 16" fill="none">
            <circle cx="8" cy="8" r="7" stroke="#8fa0b0" strokeWidth="1.200" />
            <path d="M5.800 6.300q0-2.200 2.200-2.200t2.200 2q0 1.200-1.200 1.800-1 .5-1 1.500M8 11v1.500" stroke={GOLD} strokeWidth="1.500" />
          </svg>
          <svg width="18" height="18" viewBox="0 0 18 18" fill="none">
            <path d="M0 0h18v3H0zM0 4h4v14H0z" fill="#b8c2cc" />
            <path d="M5.600 4.600h11.800v3H5.600zM5.600 9.600h11.800v3H5.600zM5.600 14.500h11.800v3H5.600z" stroke={GOLD} strokeWidth="1.100" />
          </svg>
        </TabBarIcons>
        <BrandBox>
          <svg width="14" height="14" viewBox="0 0 14 14"><path d="M0 13 4.800.5h3.400L3.400 13z" fill="#f8b41c" /><path d="M6.500 5 8.200.5 14 13h-3.700z" fill="#fff" /></svg>
          <BrandText $size={17} $up={1}>nsys</BrandText>
        </BrandBox>
      </TabBar>

      <Ribbon>
        <Group $w={106}>
          <GroupTitle>Surface</GroupTitle>
          <SurfaceStack>
            <Item $w={82}>
              <ItemIcon $w={22}><Gap $size={3} /><PlusIcon /></ItemIcon>
              Create
              <CreateCaret />
            </Item>
            <Item>
              <ItemIcon $w={22}><ManageIcon /></ItemIcon>
              Manage...
            </Item>
          </SurfaceStack>
        </Group>
        <Group $w={360}>
          <GroupTitle>Graphics</GroupTitle>
          <ItemGrid $cols="104px 134px 109px" $pad={12}>
            {graphicsItems.map((it, i) => <RibbonItem key={it.t} it={it} slot={i % 3 === 1 ? 23 : 24} />)}
          </ItemGrid>
        </Group>
        <Group $w={398}>
          <GroupTitle>Plots</GroupTitle>
          <ItemGrid $cols="110px 128px 146px" $pad={12}>
            {plotItems.map((it) => <RibbonItem key={it.t} it={it} />)}
          </ItemGrid>
        </Group>
        <Group $w={81}>
          <CenterGroup>
            <CenterLabel>Reports<Gap $size={12} /></CenterLabel>
            <CenterCaret><Caret /></CenterCaret>
          </CenterGroup>
        </Group>
        <Group $w={94}>
          <CenterGroup>
            <CenterLabel>Animation<Gap $size={12} /></CenterLabel>
            <CenterCaret><Caret /></CenterCaret>
          </CenterGroup>
        </Group>
        <Group $w={81}>
          <CenterGroup>
            <CenterLabel><span>Model<br />Specific</span><Gap $size={12} /></CenterLabel>
            <CenterCaret><Caret /></CenterCaret>
          </CenterGroup>
        </Group>
        <Group $w={10} />
      </Ribbon>

      <Main>
        <Outline>
          <PanelHeader>Outline View<Chevron /></PanelHeader>
          <HeaderStrip />
          <FilterBox>Filter Text</FilterBox>
          <TreeArea>
            <Tree>
              {tree.map((n) => (
                <TreeRow key={n.t + n.d} $indent={n.d} $short={n.bold}>
                  <ToggleSlot>{n.toggle && <ToggleIcon open={n.toggle === 'open'} />}</ToggleSlot>
                  <TreeBody $selected={n.sel} $bold={n.bold}>
                    {n.icon && <ItemIcon $w={n.iw ?? 22}>{n.icon}</ItemIcon>}
                    {n.t}
                  </TreeBody>
                </TreeRow>
              ))}
              <TreeRow $indent={28}>
                <ToggleSlot><ToggleIcon /></ToggleSlot>
                <TreeBody><DashIcon s={16} /></TreeBody>
              </TreeRow>
            </Tree>
            <VBar>
              <BarButton><Tri d="up" w={8} h={5} /></BarButton>
              <Gap $size={212} />
              <Thumb $size={123} />
              <Gap $grow />
              <BarButton><Tri d="down" w={8} h={5} /></BarButton>
            </VBar>
          </TreeArea>
          <OutlineHScroll>
            <HBar>
              <BarButton $h><Tri d="left" w={5} h={8} c="#65707c" /></BarButton>
              <Thumb $h $size={162} />
              <Gap $size={39} />
              <BarButton $h><Tri d="right" w={5} h={8} c="#65707c" /></BarButton>
            </HBar>
          </OutlineHScroll>
        </Outline>

        <Task>
          <PanelHeader $dark>Task Page<Chevron /></PanelHeader>
          <TaskBody>
            <FormView>
              <Form>
                <Box $h={125} $open>
                  <Box $h={49} $open>
                    <Columns>
                      <Column $w={176}>
                        <FieldLabel $h={20}>Length Scale Method</FieldLabel>
                        <Field $w={164}>Conservative<DownArrow /></Field>
                      </Column>
                      <Column $w={176} $drop={1}>
                        <FieldLabel $h={20}>Verbosity</FieldLabel>
                        <Field $w={160}>0</Field>
                      </Column>
                    </Columns>
                  </Box>
                  <SectionTitle $h={20}>Solid Time Scale</SectionTitle>
                  <Box $h={51}>
                    <Columns>
                      <Column $w={181}>
                        <FieldLabel>Time Step Method</FieldLabel>
                        <Field $w={169}>Automatic<DownArrow /></Field>
                      </Column>
                      <Column $w={170} $drop={1}>
                        <FieldLabel>Time Scale Factor</FieldLabel>
                        <Field $w={160} $h={20}>1</Field>
                      </Column>
                    </Columns>
                  </Box>
                </Box>
                <SectionTitle>Parameters</SectionTitle>
                <Box $h={98}>
                  <Columns>
                    <Column $w={186}>
                      <FieldLabel>Number of Iterations</FieldLabel>
                      <Field $w={174}>70<Spinner /></Field>
                      <FieldLabel $h={24}>Profile Update Interval</FieldLabel>
                      <Field $w={174}>1<Spinner /></Field>
                    </Column>
                    <Column $w={170} $drop={1}>
                      <FieldLabel>Reporting Interval</FieldLabel>
                      <Field $w={160}>1</Field>
                    </Column>
                  </Columns>
                </Box>
                <SectionTitle>Options</SectionTitle>
                <Box $h={31}>
                  <CheckRow><CheckBox />Loosely Coupled Conjugate Heat Transfer</CheckRow>
                </Box>
                <SectionTitle>Solution Processing</SectionTitle>
                <Box $h={92}>
                  <SectionTitle $h={20}>Statistics</SectionTitle>
                  <Box $h={31}>
                    <CheckRow><CheckBox />Data Sampling for Steady Statistics</CheckRow>
                  </Box>
                  <WideButton>Data File Quantities...</WideButton>
                </Box>
                <SectionTitle>Solution Advancement</SectionTitle>
                <Box $h={60}>
                  <WideButton>Calculate</WideButton>
                </Box>
              </Form>
            </FormView>
            <VBar>
              <BarButton><Tri d="up" w={8} h={5} /></BarButton>
              <Gap $size={114} />
              <Thumb $size={298} />
              <Gap $grow />
              <BarButton><Tri d="down" w={8} h={5} /></BarButton>
            </VBar>
          </TaskBody>
          <HBar>
            <BarButton $h><Tri d="left" w={5} h={8} c="#65707c" /></BarButton>
            <Thumb $h $size={195} />
            <Gap $size={61} />
            <BarButton $h><Tri d="right" w={5} h={8} c="#65707c" /></BarButton>
            <Corner />
          </HBar>
        </Task>

        <Graphics>
          <Stage>
            <ToolColumn $w={45} $pad={6}>
              <Dots $after={5} />
              <ToolButton><Sphere /></ToolButton>
              <ToolButton>
                <Svg>
                  <path d="M2 7 8 2.500v12L2 19z" fill="#e0a030" stroke="#111" />
                  <path d="M2 19l6-4.500h12L15 19z" fill="#e0a030" stroke="#111" />
                  <path d="M8 2.500h12v12H8z" fill="#fff" stroke="#111" strokeWidth="1.200" />
                  <path d="M2 7h13v12M15 7l5-4.500" stroke="#111" strokeDasharray="1.500 1.200" strokeWidth=".8" />
                  <path d="M2 7v12h13l5-4.500" stroke="#111" strokeWidth="1.200" />
                </Svg>
              </ToolButton>
              <Dots $before={6} $after={5} />
              <ToolButton $active>
                <svg width="22" height="22" viewBox="0 0 22 22"><path d="M7 2.500v14l3.500-3 2.500 6 2.500-1-2.500-5.500h4.500z" fill={GOLD} stroke="#6c5428" strokeWidth=".8" /></svg>
              </ToolButton>
              <ToolButton>
                <Svg>
                  <path d="M4.500 9Q6 4 11 4q4.500 0 6.500 3.500" stroke={GOLD} strokeWidth="1.300" />
                  <path d="M2.500 8h4.500L4.500 11.500z" fill={GOLD} />
                  <path d="M18 13.500Q16.500 18.500 11 18.500q-4.500 0-6.500-3.500" stroke="#222" strokeWidth="1.300" />
                  <path d="M15.500 14.500H20l-2-3.500z" fill="#222" />
                </Svg>
              </ToolButton>
              <ToolButton>
                <Svg>
                  <path d="M11 6v10M6 11h10" stroke={GOLD} strokeWidth="1.200" />
                  <path d="M11 2.500l2 3.500H9zM11 19.500l2-3.500H9zM2.500 11 6 9v4zM19.500 11 16 9v4z" fill="#222" />
                  <circle cx="11" cy="11" r="1.300" fill="#fff" />
                </Svg>
              </ToolButton>
              <ToolButton>
                <svg width="26" height="22" viewBox="0 0 26 22" fill="none">
                  <circle cx="13" cy="11" r="5.800" stroke={GOLD} strokeWidth="1.300" />
                  <path d="M17 15l2.800 3.500" stroke="#222" strokeWidth="1.500" />
                  <path d="M1.500 11.500h4.500M20 11.500h5M22.500 9.500v4" stroke="#222" strokeWidth="1.400" />
                </svg>
              </ToolButton>
              <ToolButton><Lens /></ToolButton>
              <ToolButton>
                <Svg>
                  <circle cx="11" cy="11.500" r="8" stroke="#333" strokeWidth="1.200" />
                  <path d="M9.500 10.200h2v5.500M9 16h4.500" stroke={GOLD} strokeWidth="1.400" />
                  <path d="M10.200 6.300h2v2h-2z" fill={GOLD} />
                </Svg>
              </ToolButton>
              <Dots $before={6} $after={5} />
              <ToolButton>
                <Svg>
                  <path d="M2.500 2l11 4v6.500L2.500 18z" fill="#1c1c1c" />
                  <path d="M6 3.500v13M9.500 5v10M2.500 10.500l11-1.500" stroke="#a07414" strokeWidth=".8" />
                  <path d="M13 12h3l2 1.500M9 15.500h10M3 19.500h18" stroke={GOLD} strokeWidth="1.200" />
                </Svg>
              </ToolButton>
              <ToolButton><Lens><path d="M7.500 8h6v5h-6z" stroke="#444" strokeWidth="1.100" /></Lens></ToolButton>
              <ToolButton><Lens><path d="M8 10.500h6" stroke={GOLD} strokeWidth="1.300" /><path d="M10 8.200 7 10.500l3 2.300z" fill={GOLD} /></Lens></ToolButton>
              <MorePill $mt={17}><PillMark /></MorePill>
            </ToolColumn>

            <ViewColumn>
              <ViewTabs>
                {viewTabs.map((v) => (
                  <ViewTab key={v.t} $w={v.w}>
                    <TabShape width={v.w} height="29" fill="none">
                      <path d={`M0.500 29 9 3Q10 .5 13 .5H${v.w - 13}Q${v.w - 10} .5 ${v.w - 9} 3L${v.w - 0.5} 29`} fill={v.active ? '#ccd2e2' : '#efefef'} stroke="#34455a" />
                    </TabShape>
                    <TabFace>
                      <FluentIcon gray={!v.active} />
                      <TabText $shift={v.shift} $ls={v.ls}>{v.t}</TabText>
                      <CloseIcon />
                    </TabFace>
                  </ViewTab>
                ))}
              </ViewTabs>
              <Viewport>
                <Placed $x={11} $y={7}>
                  <SceneText>Static Temperature<br />[ K ]</SceneText>
                </Placed>
                <Placed $x={20} $y={77}>
                  <Legend>
                    <LegendBar />
                    <LegendScale>
                      {legend.map((l) => <LegendRow key={l}>{l}</LegendRow>)}
                    </LegendScale>
                  </Legend>
                </Placed>
                <Placed $x={9} $y={397}>
                  <SceneText $ls={0.03}>sink-temperature</SceneText>
                </Placed>
                <Placed $x={290} $y={54}><HeatSink /></Placed>
                <Placed $x={611} $y={6}>
                  <LogoBlock>
                    <LogoRow>
                      <svg width="23" height="21" viewBox="0 0 23 21"><path d="M0 20 7.500 1H14l8.500 19h-6L11.500 8 6 20z" fill="#000" /><path d="M12 6 6.500 20" stroke="#ccd2e2" strokeWidth=".6" /></svg>
                      <BrandText $size={25} $up={2}>nsys</BrandText>
                    </LogoRow>
                    <BrandText $size={12} $ls={0.25}>2024 R2</BrandText>
                    <LogoRule />
                    <StudentRow><BrandText $size={13} $ls={0.3}>STUDENT</BrandText></StudentRow>
                  </LogoBlock>
                </Placed>
              </Viewport>
            </ViewColumn>

            <ToolColumn $w={41} $pad={6}>
              <Dots $after={5} />
              <ToolButton>
                <Svg>
                  <defs><linearGradient id="refl" x1="0" y1="0" x2="0" y2="1"><stop offset="0" stopColor="#e0b860" /><stop offset="1" stopColor="#fdf6e4" /></linearGradient></defs>
                  <ellipse cx="11.500" cy="5.500" rx="9" ry="4" fill={GOLD} />
                  <path d="M1 11.500h21" stroke="#888" />
                  <ellipse cx="11.500" cy="17" rx="9" ry="4" fill="url(#refl)" />
                </Svg>
              </ToolButton>
              <ToolButton>
                <Svg>
                  <ellipse cx="15.500" cy="12" rx="7.500" ry="4.300" fill="#606060" transform="rotate(-42 15.500 12)" />
                  <ellipse cx="7.500" cy="11" rx="5" ry="9.300" fill={GOLD} stroke="#a08040" strokeWidth=".6" />
                </Svg>
              </ToolButton>
              <ToolButton>
                <svg width="26" height="26" viewBox="0 0 26 26">
                  <path d="M1 6l5-5M1 12 12 1M1 18 18 1M1 24 24 1M6 25 25 6M12 25 25 12M18 25l7-7M20 1l5 5M14 1l11 11M8 1l17 17M2 1l23 23M1 6l19 19M1 12l13 13M1 18l7 7" stroke="#c4c4c4" strokeWidth=".9" />
                  <ellipse cx="13.500" cy="13.500" rx="5.300" ry="9.300" fill={GOLD} stroke="#888" strokeWidth=".8" />
                </svg>
              </ToolButton>
              <Dots $before={6} $after={5} />
              <ToolButton><Eye /></ToolButton>
              <ToolButton><Eye off /></ToolButton>
              <ToolButton>
                <Svg>
                  <path d="M1.800 2.500h14v14h-14z" stroke="#333" strokeWidth="1.400" />
                  <path d="M5 6h15v13H5z" fill={GOLD} />
                </Svg>
              </ToolButton>
              <ToolButton>
                <Svg>
                  <path d="M3 8V3.500h17v15h-6" stroke={GOLD} strokeWidth="1.200" strokeDasharray="2 1.300" />
                  <path d="M3 11q8.500-1 9.500 8" stroke="#222" strokeWidth="1.300" />
                  <path d="M.8 11.500l3.500-2v3.500z" fill="#222" />
                </Svg>
              </ToolButton>
              <Dots $before={6} $after={5} />
              <ToolButton>
                <Svg>
                  <path d="M4.500 4v15h14M4.500 18.500 14.500 11" stroke="#222" strokeWidth="1.200" />
                  <path d="M4.500 2.500l1.500 2.500h-3zM20 19l-2.500-1.500v3zM16.500 9.500l-3 .6 2 2.400z" fill={GOLD} stroke={GOLD} />
                </Svg>
              </ToolButton>
              <ToolButton>
                <Svg>
                  <rect x=".8" y="9.300" width="20.400" height="4.600" rx="2.300" stroke="#777" fill="#fff" />
                  <path d="M2.500 9.500H12v4.200H2.500q-1.300-2 0-4.200z" fill={GOLD} />
                </Svg>
              </ToolButton>
              <MorePill $mt={26} $mb={10}><PillMark /></MorePill>
              <Dots $after={5} />
              <ToolButton>
                <Svg>
                  <path d="M5 17V4.500h11" stroke="#111" strokeWidth="2" />
                  <path d="M8 7.500h9.500V19H8z" stroke={GOLD} strokeWidth="1.200" />
                </Svg>
              </ToolButton>
              <MorePill $mt={1}><PillMark /></MorePill>
            </ToolColumn>
          </Stage>
          <SelectRow>
            <DotsV />
            <SelectLabel>0 selected</SelectLabel>
            <Field $w={167}>all<DownArrow /></Field>
          </SelectRow>
          <BottomTabs>
            <BottomTab $w={69}>Console</BottomTab>
            <BottomTab $w={73} $active>Graphics</BottomTab>
            <BottomRule />
          </BottomTabs>
        </Graphics>
      </Main>
      <Footer />
    </Window>
  );
}
